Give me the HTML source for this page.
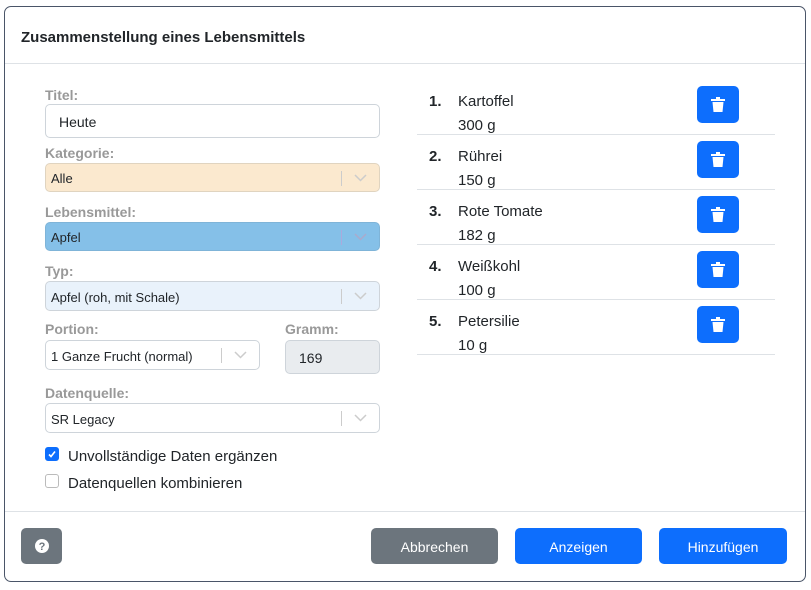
<!DOCTYPE html>
<html><head><meta charset="utf-8"><style>
*{box-sizing:border-box;margin:0;padding:0}
body{width:811px;height:590px;background:#fff;font-family:"Liberation Sans",sans-serif;color:#212529;position:relative;overflow:hidden}
.modal{position:absolute;left:4px;top:6px;width:802px;height:576px;border:1px solid #4a5568;border-radius:7px;background:#fff}
.a{position:absolute}
.title{left:21px;top:29px;font-size:15px;font-weight:bold;color:#212529}
.hr{height:1px;background:#dee2e6}
.lbl{font-size:14px;font-weight:bold;color:#999}
.box{border:1px solid #ced4da;border-radius:5px;font-size:13px;padding-left:5px;display:flex;align-items:center;padding-top:2px}
.sel .sep{position:absolute;right:37px;top:7px;width:1px;height:15px;background:#ccc}
.sel svg{position:absolute;right:12px;top:50%;margin-top:-4px}
.cb{width:14px;height:14px;border-radius:3px;border:1px solid #bbb}
.num{font-size:15px;font-weight:bold;left:429px}
.it{font-size:15px;left:458px}
.tb{left:697px;width:42px;height:37px;background:#0d6efd;border-radius:5px}
.tb svg{position:absolute;left:14px;top:11px}
.btn{top:528px;height:36px;border-radius:5px;color:#fff;font-size:14px;display:flex;align-items:center;justify-content:center;padding-top:2px}
</style></head><body>
<div class="modal"></div>
<div class="a title">Zusammenstellung eines Lebensmittels</div>
<div class="a hr" style="left:5px;top:63px;width:800px"></div>

<div class="a lbl" style="left:45px;top:87px">Titel:</div>
<div class="a box" style="left:45px;top:104px;width:335px;height:34px;padding-left:13px;font-size:14px">Heute</div>
<div class="a lbl" style="left:45px;top:145px">Kategorie:</div>
<div class="a box sel" style="left:45px;top:163px;width:335px;height:29px;background:#fbe9cf;border-color:#e0d4c0">Alle<span class="sep"></span><svg width="13" height="8"><path d="M1 1l5.5 5.5L12 1" stroke="#ccc" stroke-width="1.5" fill="none"/></svg></div>
<div class="a lbl" style="left:45px;top:204px">Lebensmittel:</div>
<div class="a box sel" style="left:45px;top:222px;width:335px;height:29px;background:#85c0e8;border-color:#7fb4d8">Apfel<span class="sep" style="background:#aad"></span><svg width="13" height="8"><path d="M1 1l5.5 5.5L12 1" stroke="#aac" stroke-width="1.5" fill="none"/></svg></div>
<div class="a lbl" style="left:45px;top:263px">Typ:</div>
<div class="a box sel" style="left:45px;top:281px;width:335px;height:30px;background:#e9f2fb">Apfel (roh, mit Schale)<span class="sep"></span><svg width="13" height="8"><path d="M1 1l5.5 5.5L12 1" stroke="#ccc" stroke-width="1.5" fill="none"/></svg></div>
<div class="a lbl" style="left:45px;top:321px">Portion:</div>
<div class="a box sel" style="left:45px;top:340px;width:215px;height:30px">1 Ganze Frucht (normal)<span class="sep"></span><svg width="13" height="8"><path d="M1 1l5.5 5.5L12 1" stroke="#ccc" stroke-width="1.5" fill="none"/></svg></div>
<div class="a lbl" style="left:285px;top:321px">Gramm:</div>
<div class="a box" style="left:285px;top:340px;width:95px;height:34px;background:#e9ecef;padding-left:13px;font-size:14px">169</div>
<div class="a lbl" style="left:45px;top:385px">Datenquelle:</div>
<div class="a box sel" style="left:45px;top:403px;width:335px;height:30px">SR Legacy<span class="sep"></span><svg width="13" height="8"><path d="M1 1l5.5 5.5L12 1" stroke="#ccc" stroke-width="1.5" fill="none"/></svg></div>

<div class="a cb" style="left:45px;top:447px;background:#0d6efd;border-color:#0d6efd"><svg width="12" height="12" style="position:absolute;left:0;top:0"><path d="M3 6.5l2 2 4-5" stroke="#fff" stroke-width="1.6" fill="none"/></svg></div>
<div class="a" style="left:68px;top:448px;font-size:15px">Unvollständige Daten ergänzen</div>
<div class="a cb" style="left:45px;top:474px"></div>
<div class="a" style="left:68px;top:475px;font-size:15px">Datenquellen kombinieren</div>

<div class="a num" style="top:93px">1.</div><div class="a it" style="top:93px">Kartoffel</div><div class="a it" style="top:117px">300 g</div>
<div class="a tb" style="top:86px"><svg width="14" height="15"><rect x="0" y="2" width="14" height="2" fill="#fff"/><rect x="5" y="0" width="4" height="2" fill="#fff"/><path d="M1.5 5h11l-1 10h-9z" fill="#fff"/></svg></div>
<div class="a hr" style="left:417px;top:134px;width:358px"></div>
<div class="a num" style="top:148px">2.</div><div class="a it" style="top:148px">Rührei</div><div class="a it" style="top:172px">150 g</div>
<div class="a tb" style="top:141px"><svg width="14" height="15"><rect x="0" y="2" width="14" height="2" fill="#fff"/><rect x="5" y="0" width="4" height="2" fill="#fff"/><path d="M1.5 5h11l-1 10h-9z" fill="#fff"/></svg></div>
<div class="a hr" style="left:417px;top:189px;width:358px"></div>
<div class="a num" style="top:203px">3.</div><div class="a it" style="top:203px">Rote Tomate</div><div class="a it" style="top:227px">182 g</div>
<div class="a tb" style="top:196px"><svg width="14" height="15"><rect x="0" y="2" width="14" height="2" fill="#fff"/><rect x="5" y="0" width="4" height="2" fill="#fff"/><path d="M1.5 5h11l-1 10h-9z" fill="#fff"/></svg></div>
<div class="a hr" style="left:417px;top:244px;width:358px"></div>
<div class="a num" style="top:258px">4.</div><div class="a it" style="top:258px">Weißkohl</div><div class="a it" style="top:282px">100 g</div>
<div class="a tb" style="top:251px"><svg width="14" height="15"><rect x="0" y="2" width="14" height="2" fill="#fff"/><rect x="5" y="0" width="4" height="2" fill="#fff"/><path d="M1.5 5h11l-1 10h-9z" fill="#fff"/></svg></div>
<div class="a hr" style="left:417px;top:299px;width:358px"></div>
<div class="a num" style="top:313px">5.</div><div class="a it" style="top:313px">Petersilie</div><div class="a it" style="top:337px">10 g</div>
<div class="a tb" style="top:306px"><svg width="14" height="15"><rect x="0" y="2" width="14" height="2" fill="#fff"/><rect x="5" y="0" width="4" height="2" fill="#fff"/><path d="M1.5 5h11l-1 10h-9z" fill="#fff"/></svg></div>
<div class="a hr" style="left:417px;top:354px;width:358px"></div>

<div class="a hr" style="left:5px;top:511px;width:800px"></div>
<div class="a btn" style="left:21px;width:41px;background:#6c757d;padding-top:0"><svg width="14" height="14"><circle cx="7" cy="7" r="7" fill="#fff"/><text x="7" y="11" font-size="11" font-weight="bold" text-anchor="middle" fill="#6c757d" font-family="Liberation Sans">?</text></svg></div>
<div class="a btn" style="left:371px;width:127px;background:#6c757d">Abbrechen</div>
<div class="a btn" style="left:515px;width:127px;background:#0d6efd">Anzeigen</div>
<div class="a btn" style="left:659px;width:128px;background:#0d6efd">Hinzufügen</div>
</body></html>
